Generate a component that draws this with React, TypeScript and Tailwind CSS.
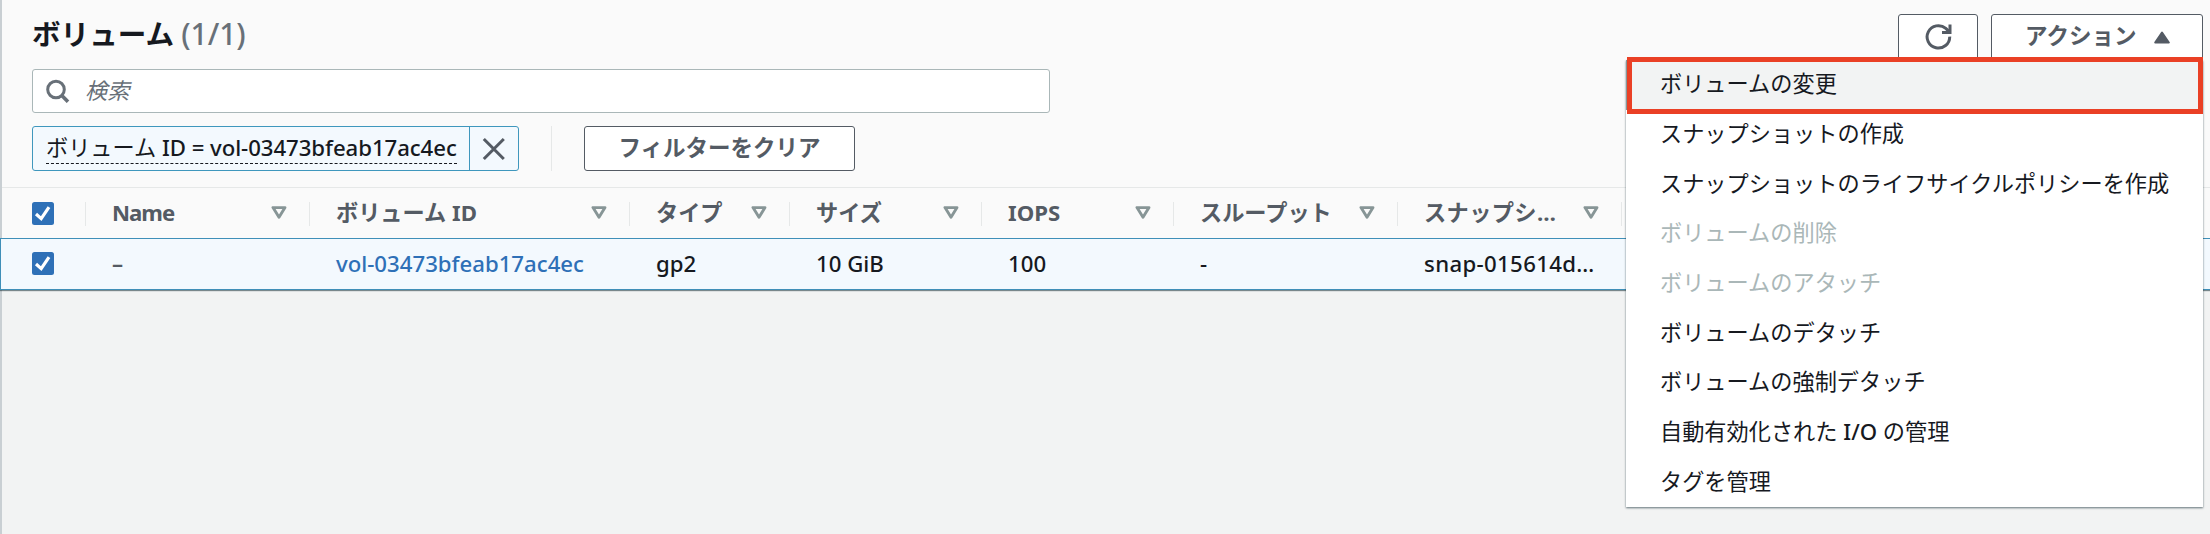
import React from "react";

type Column = { label: string; value: string; width: string; labelStyle?: string; valueStyle: string };

const columns: Column[] = [
  { label: "Name", value: "–", width: "w-[224px]", labelStyle: "tracking-[-1px]", valueStyle: "font-semibold text-[#545b64]" },
  { label: "ボリューム ID", value: "vol-03473bfeab17ac4ec", width: "w-[320px]", valueStyle: "font-medium text-[#2e70b7]" },
  { label: "タイプ", value: "gp2", width: "w-[160px]", valueStyle: "font-medium" },
  { label: "サイズ", value: "10 GiB", width: "w-[192px]", valueStyle: "font-medium" },
  { label: "IOPS", value: "100", width: "w-[192px]", valueStyle: "font-medium" },
  { label: "スループット", value: "-", width: "w-[224px]", valueStyle: "font-medium" },
  { label: "スナップシ…", value: "snap-015614d…", width: "w-[224px]", labelStyle: "tracking-[0.4px]", valueStyle: "font-medium tracking-[0.35px]" },
];

const actions: { label: React.ReactNode; id: string; disabled?: boolean; active?: boolean }[] = [
  { id: "modify", label: "ボリュームの変更", active: true },
  { id: "snapshot", label: "スナップショットの作成" },
  { id: "lifecycle", label: "スナップショットのライフサイクルポリシーを作成" },
  { id: "delete", label: "ボリュームの削除", disabled: true },
  { id: "attach", label: "ボリュームのアタッチ", disabled: true },
  { id: "detach", label: "ボリュームのデタッチ" },
  { id: "force-detach", label: "ボリュームの強制デタッチ" },
  { id: "auto-io", label: <>自動有効化された <span className="font-medium">I/O</span> の管理</> },
  { id: "tags", label: "タグを管理" },
];

function Checkbox() {
  return (
    <svg className="mb-px block h-[23px] w-[22px] shrink-0" viewBox="0 0 22 23">
      <rect width="22" height="23" rx="2.5" fill="#2e70b7" />
      <path d="M4 12 L9.2 16.6 L17 5.2" fill="none" stroke="#fff" strokeWidth="3.2" />
    </svg>
  );
}

function SortIcon() {
  return (
    <svg className="mb-[2px] block h-[13px] w-4 shrink-0" viewBox="0 0 16 13">
      <path d="M2 1.6 H14 L8 11.2 Z" fill="none" stroke="#879596" strokeWidth="2.9" strokeLinejoin="round" />
    </svg>
  );
}

export default function App() {
  return (
    <div className="relative flex h-[534px] w-[2210px] flex-col overflow-hidden bg-[#f2f3f3] font-['Noto_Sans','Noto_Sans_CJK_JP',sans-serif] text-[22.2px] leading-[30px] text-[#16191f]">
      <div className="flex h-[239px] shrink-0 flex-col border-l-2 border-[#c9cfd3] bg-[#fafafa]">
        <div className="flex h-[69px] shrink-0 items-start justify-between pl-[30px] pr-[7px]">
          <h2 className="mt-[14px] flex gap-[7px] text-[28.6px] font-bold leading-[40px]">
            ボリューム
            <span className="text-[30px] font-medium text-[#687078]">(1/1)</span>
          </h2>
          <div className="mt-[14px] flex gap-[13px]">
            <button className="flex h-[46px] w-20 items-start justify-center rounded-[3px] border border-[#545b64] bg-white pt-[9px]">
              <svg className="h-[26px] w-[27px]" viewBox="0 0 27 26" fill="none" stroke="#545b64" strokeWidth="3">
                <path d="M24.7 12.6 A11.3 11.2 0 1 1 20.8 4.4 L25 8.4" />
                <path d="M25 0.4 V8.4 H17" />
              </svg>
            </button>
            <button className="flex h-[46px] w-[212px] items-start rounded-[3px] border border-[#545b64] bg-white pl-[33px] pt-[6px] text-[22.5px] font-bold text-[#545b64]">
              アクション
              <svg className="ml-[18px] mt-[10px] h-[13px] w-4" viewBox="0 0 16 13">
                <path d="M8 1.5 L14.8 11.5 H1.2 Z" fill="#545b64" stroke="#545b64" strokeWidth="2" strokeLinejoin="round" />
              </svg>
            </button>
          </div>
        </div>

        <div className="ml-[30px] flex h-11 w-[1018px] shrink-0 items-center rounded-[3px] border border-[#aab7b8] bg-white pl-[13px]">
          <svg className="h-6 w-6" viewBox="0 0 24 24" fill="none" stroke="#687078" strokeWidth="3">
            <circle cx="10" cy="10.5" r="8.3" />
            <path d="M15.8 16.5 L22 22.8" strokeWidth="3.6" />
          </svg>
          <span className="ml-[15px] italic text-[#687078]">検索</span>
        </div>

        <div className="mt-[13px] flex h-[45px] shrink-0 pl-[30px]">
          <div className="flex w-[487px] rounded-[3px] border border-[#3f97bd] bg-[#f3f9fe]">
            <div className="flex w-[436px] pl-[13px]">
              <span className="h-[37px] whitespace-nowrap border-b border-dashed border-[#16191f] pt-[6px]">
                ボリューム <span className="font-medium tracking-[-0.06px]">ID = vol-03473bfeab17ac4ec</span>
              </span>
            </div>
            <div className="flex flex-1 items-center justify-center border-l border-[#3f97bd]">
              <svg className="h-6 w-6" viewBox="0 0 24 24" stroke="#545b64" strokeWidth="3">
                <path d="M1.8 2 L21.8 22 M21.8 2 L1.8 22" />
              </svg>
            </div>
          </div>
          <div className="ml-8 w-px bg-[#e6e8e8]" />
          <button className="ml-8 w-[271px] rounded-[3px] border border-[#545b64] bg-white pb-[2px] text-[22.5px] font-bold text-[#545b64]">
            フィルターをクリア
          </button>
        </div>

        <div className="mt-4 flex flex-1 items-center border-t border-[#e6e8e8] pl-[30px]">
          <div className="w-[53px]"><Checkbox /></div>
          {columns.map((c) => (
            <div key={c.label} className={`flex h-6 items-center border-l border-[#e6e8e8] pl-[26px] pr-[22px] ${c.width}`}>
              <span className={`flex-1 whitespace-nowrap pb-px font-bold text-[#545b64] ${c.labelStyle ?? ""}`}>{c.label}</span>
              <SortIcon />
            </div>
          ))}
          <div className="h-6 w-px bg-[#e6e8e8]" />
        </div>
      </div>

      <div className="relative -mt-px flex h-[52px] shrink-0 items-center border-y border-l border-[#3f8fb8] bg-[#f3f9fe] pl-[31px] shadow-[0_1px_1px_rgba(0,28,36,0.5)]">
        <div className="w-[53px]"><Checkbox /></div>
        {columns.map((c) => (
          <div key={c.label} className={`whitespace-nowrap pb-px pl-[27px] ${c.width} ${c.valueStyle}`}>
            {c.value}
          </div>
        ))}
      </div>
      <div className="flex-1 border-l-2 border-[#c9cfd3]" />

      <ul className="absolute left-[1626px] top-[60px] h-[447px] w-[577px] bg-white shadow-[0_1px_2px_rgba(0,28,36,0.6)]">
        {actions.map((a) => (
          <li
            key={a.id}
            className={`flex h-[49.67px] items-center pb-px ${a.active ? "border border-[#879596] bg-[#f2f3f3] pl-[33px]" : "pl-[34px]"} ${a.disabled ? "text-[#aab7b8]" : ""}`}
          >
            <span className="whitespace-pre">{a.label}</span>
          </li>
        ))}
      </ul>
      <div className="absolute left-[1627px] top-[57px] h-[57px] w-[576px] border-[5px] border-[#ea4025]" />
    </div>
  );
}
